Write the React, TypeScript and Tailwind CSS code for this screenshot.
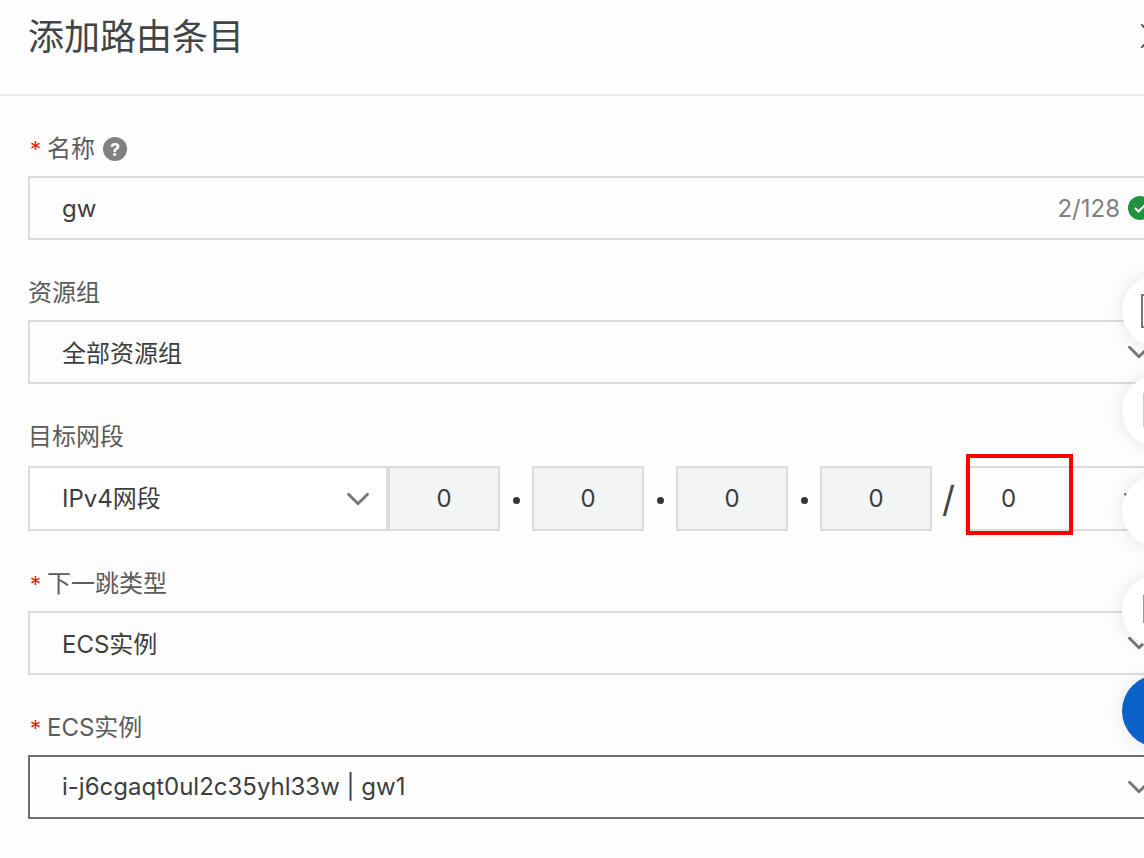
import React from 'react';
import { ChevronDown, X } from 'lucide-react';

const font = '[font-family:Inter,"Noto_Sans_CJK_SC",sans-serif]';

const Label = ({ text, required, help }: { text: string; required?: boolean; help?: boolean }) => (
  <div className="flex h-8 items-center text-[24px] text-[#5c5c5c]">
    {required && <span className="w-[19px] pl-[2px] text-[22px] text-[#e62412]">*</span>}
    <span>{text}</span>
    {help && (
      <span className="ml-2 flex h-6 w-6 items-center justify-center rounded-full bg-[#808080] text-[18px] font-bold text-white">?</span>
    )}
  </div>
);

const SelectBox = ({ value, dark }: { value: string; dark?: boolean }) => (
  <div className={`flex h-16 w-[1200px] items-center justify-between border-2 pl-8 pr-[68px] text-[24px] text-[#3d3d3d] ${dark ? 'border-[#6f6f6f]' : 'border-[#dcdcdc]'}`}>
    <span className={dark ? '' : 'pt-[3px]'}>{value}</span>
    <ChevronDown size={38} strokeWidth={1.8} className="text-[#777]" />
  </div>
);

const Octet = () => (
  <div className="flex h-[65px] w-28 shrink-0 items-center justify-center border-2 border-[#dcdcdc] bg-[#f3f4f4] text-[24px] text-[#3d3d3d]">0</div>
);

const Dot = () => (
  <div className="flex w-8 shrink-0 justify-center pt-1">
    <span className="h-[7px] w-[7px] rounded-full bg-[#333]" />
  </div>
);

const Floating = ({ blue, edge }: { blue?: boolean; edge?: string }) => (
  <div className={`h-[72px] w-[72px] rounded-full shadow-[0_0_18px_rgba(0,0,0,0.1)] ${blue ? 'bg-[#0a62c9]' : 'bg-white'}`}>
    {edge && <div className={edge} />}
  </div>
);

export default function App() {
  return (
    <div className={`relative h-[858px] w-[1144px] overflow-hidden bg-[#fdfdfd] ${font}`}>
      {/* header */}
      <div className="relative flex h-24 items-start border-b-2 border-[#e8e8e8] pl-7 pt-[12px]">
        <h1 className="text-[36px] leading-[50px] font-normal text-[#3f4548]">添加路由条目</h1>
        <X size={44} strokeWidth={1.1} className="absolute left-[1131px] top-[14px] text-[#555]" />
      </div>

      <div className="pl-7 pt-[37px]">
        <Label text="名称" required help />
        <div className="mt-[11px] flex h-16 w-[1200px] items-center justify-between border-2 border-[#dcdcdc] pl-8 pr-[74px] text-[24px] text-[#3d3d3d]">
          <span className="pt-px">gw</span>
          <span className="flex items-center">
            <span className="pt-px text-[#808080]">2/128</span>
            <span className="ml-2 flex h-6 w-6 items-center justify-center rounded-full bg-[#1f9240]">
              <svg width="14" height="14" viewBox="0 0 14 14" fill="none" stroke="white" strokeWidth="2">
                <path d="M2 7l3.5 3.5L12 4" />
              </svg>
            </span>
          </span>
        </div>

        <div className="mt-[37px]">
          <Label text="资源组" />
          <div className="mt-[11px]"><SelectBox value="全部资源组" /></div>
        </div>

        <div className="mt-[37px]">
          <Label text="目标网段" />
          <div className="mt-[13px] flex items-center">
            <div className="flex h-[65px] w-[360px] shrink-0 items-center justify-between border-2 border-[#dcdcdc] bg-white pl-8 pr-[9px] text-[24px] text-[#3d3d3d]">
              <span>IPv4网段</span>
              <ChevronDown size={38} strokeWidth={1.8} className="text-[#777]" />
            </div>
            <Octet />
            <Dot />
            <Octet />
            <Dot />
            <Octet />
            <Dot />
            <Octet />
            <div className="w-[33px] shrink-0 text-center text-[36px] leading-none text-[#444]">/</div>
            <div className="flex h-[65px] w-[193px] shrink-0 items-center justify-between border-2 border-[#dcdcdc] pl-[34px] pr-[2px] text-[24px] text-[#3d3d3d]">
              <span>0</span>
              <ChevronDown size={38} strokeWidth={1.8} className="text-[#777]" />
            </div>
          </div>
        </div>

        <div className="mt-[37px]">
          <Label text="下一跳类型" required />
          <div className="mt-[11px]"><SelectBox value="ECS实例" /></div>
        </div>

        <div className="mt-[37px]">
          <Label text="ECS实例" required />
          <div className="mt-[11px]"><SelectBox value="i-j6cgaqt0ul2c35yhl33w | gw1" dark /></div>
        </div>
      </div>

      {/* highlight drawn over the screenshot */}
      <div className="absolute left-[966px] top-[454px] h-[81px] w-[107px] border-4 border-[#ff0000]" />

      {/* floating tools */}
      <div className="absolute left-[1122px] top-[275px] flex flex-col gap-7">
        <Floating edge="ml-[19px] mt-[19px] h-[34px] w-[30px] border-2 border-[#777]" />
        <Floating edge="ml-[21px] mt-[18px] h-[34px] w-[30px] border-l-2 border-[#ccc]" />
        <Floating />
        <Floating edge="ml-[21px] mt-5 h-7 w-[30px] border-l-2 border-[#999]" />
        <Floating blue />
      </div>
    </div>
  );
}
